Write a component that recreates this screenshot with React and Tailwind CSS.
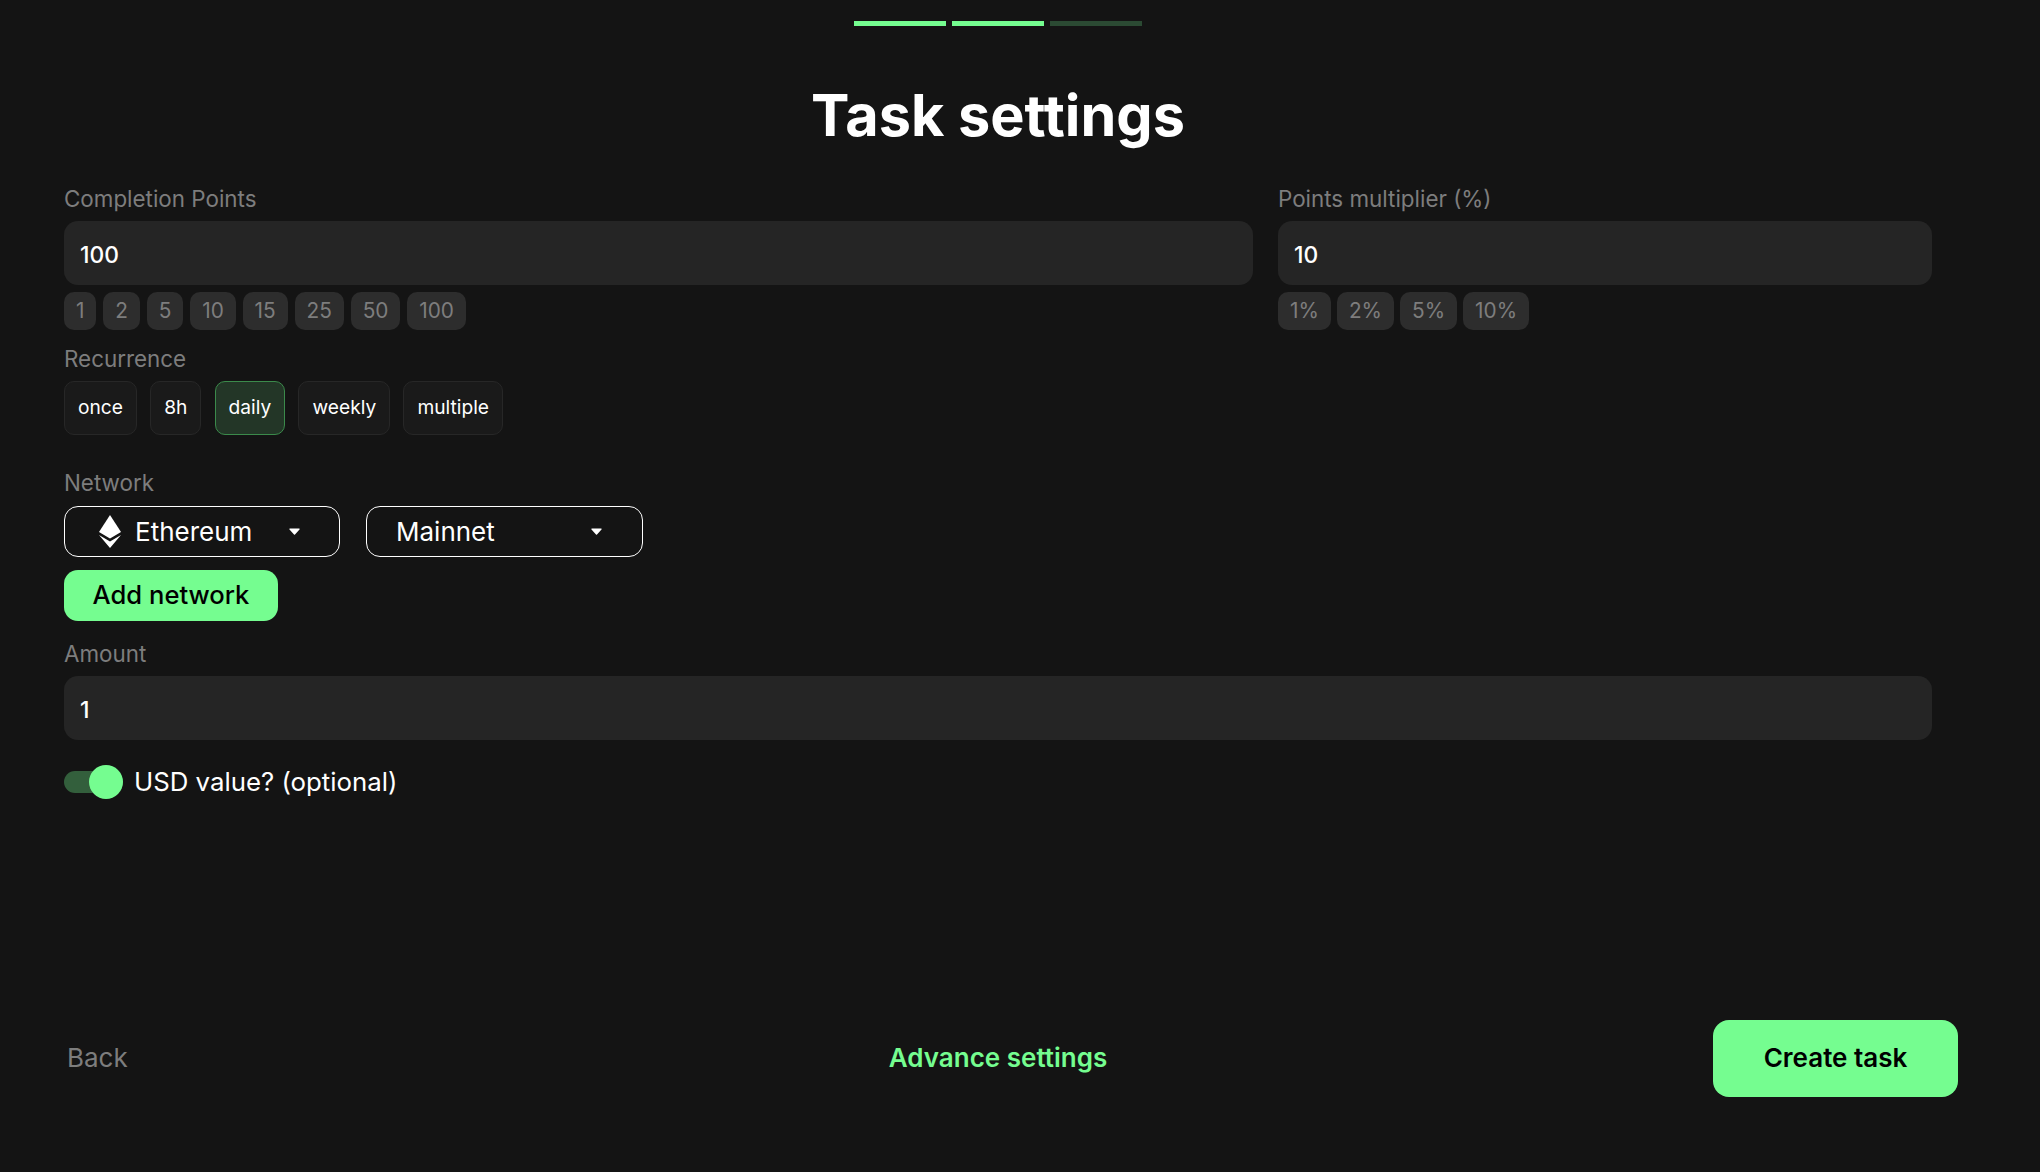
import React from 'react';

const pointPresets = ['1', '2', '5', '10', '15', '25', '50', '100'];
const multiplierPresets = ['1%', '2%', '5%', '10%'];
const recurrences = ['once', '8h', 'daily', 'weekly', 'multiple'];

const FieldLabel = ({ children }) => (
  <label className="block text-[22.4px] leading-[28px] text-[#7d7d7d]">{children}</label>
);

const TextField = ({ value }) => (
  <input
    readOnly
    value={value}
    className="block w-full h-16 mt-[8px] pl-[16px] pr-[15px] pt-[2px] rounded-[14px] bg-[#252525] text-[22.8px] font-medium text-white outline-none"
  />
);

const Presets = ({ items, className }) => (
  <div className={className}>
    {items.map((item) => (
      <button
        key={item}
        className="h-[38px] px-[12px] rounded-[10px] bg-[#2d2d2d] text-[20.8px] leading-[38px] text-[#7d7d7d]"
      >
        {item}
      </button>
    ))}
  </div>
);

const Caret = () => (
  <svg width="11" height="7" viewBox="0 0 11 7" className="shrink-0">
    <path d="M1 0.5h9c.6 0 .9.7.5 1.1L6 6.5c-.3.3-.7.3-1 0L.5 1.6C.1 1.2.4.5 1 .5z" fill="#fff" />
  </svg>
);

const EthIcon = () => (
  <svg width="22" height="33" viewBox="0 0 22 33" className="shrink-0">
    <path d="M11 0L22 17L11 23.5L0 17Z" fill="#fff" />
    <path d="M0 20L11 26.5L22 20L11 33Z" fill="#fff" />
  </svg>
);

const App = () => {
  return (
    <div className="h-[1172px] bg-[#141414] pl-[64px] pr-[108px] font-['Inter',sans-serif] text-white overflow-hidden">
      <div className="flex justify-center gap-[6px] pt-[21px]">
        <div className="w-[92px] h-[5px] bg-[#75fd90]" />
        <div className="w-[92px] h-[5px] bg-[#75fd90]" />
        <div className="w-[92px] h-[5px] bg-[#2b4a33]" />
      </div>

      <h1 className="mt-[51px] text-center text-[57.6px] leading-[76px] font-bold text-white">Task settings</h1>

      <div className="flex gap-[25px] mt-[32px]">
        <div className="w-[1189px]">
          <FieldLabel>Completion Points</FieldLabel>
          <TextField value="100" />
          <Presets items={pointPresets} className="flex gap-[6.8px] mt-[7px]" />
        </div>
        <div className="flex-1">
          <FieldLabel>Points multiplier (%)</FieldLabel>
          <TextField value="10" />
          <Presets items={multiplierPresets} className="flex gap-[6px] mt-[7px]" />
        </div>
      </div>

      <div className="mt-[15px]">
        <FieldLabel>Recurrence</FieldLabel>
        <div className="flex gap-[13.2px] mt-[8px]">
          {recurrences.map((item) => (
            <button
              key={item}
              className={
                item === 'daily'
                  ? 'h-[54px] px-[13px] pb-[1px] rounded-[10px] border border-[#3b8a4b] bg-[#233627] text-[19.2px] text-white'
                  : 'h-[54px] px-[13px] pb-[1px] rounded-[10px] border border-[#272727] bg-[#1a1a1a] text-[19.2px] text-white'
              }
            >
              {item}
            </button>
          ))}
        </div>
      </div>

      <div className="mt-[34px]">
        <FieldLabel>Network</FieldLabel>
        <div className="flex gap-[26px] mt-[9px]">
          <button className="flex items-center w-[276px] h-[51px] pl-[34px] rounded-[14px] border border-white">
            <EthIcon />
            <span className="ml-[14px] w-[154px] text-left text-[26px]">Ethereum</span>
            <Caret />
          </button>
          <button className="flex items-center w-[277px] h-[51px] pl-[29px] rounded-[14px] border border-white">
            <span className="w-[195px] text-left text-[26px]">Mainnet</span>
            <Caret />
          </button>
        </div>
        <button className="block w-[214px] h-[51px] mt-[13px] rounded-[14px] bg-[#75fd90] text-[25.6px] font-medium text-black">
          Add network
        </button>
      </div>

      <div className="mt-[19px]">
        <FieldLabel>Amount</FieldLabel>
        <TextField value="1" />
      </div>

      <div className="flex items-center mt-[25px] h-[34px]">
        <div className="relative w-[59px] h-[22px] rounded-full bg-[#335f3c]">
          <div className="absolute right-0 top-[-6px] w-[34px] h-[34px] rounded-full bg-[#75fd90]" />
        </div>
        <span className="ml-[11px] text-[25.8px] text-white">USD value? (optional)</span>
      </div>

      <div className="grid grid-cols-[1fr_auto_1fr] items-center mt-[221px]">
        <button className="justify-self-start pl-[3px] pb-[2px] text-[26px] text-[#7d7d7d]">Back</button>
        <button className="pb-[2px] text-[26px] font-semibold text-[#75fd90]">Advance settings</button>
        <button className="justify-self-end w-[245px] h-[77px] mr-[-26px] pb-[2px] rounded-[16px] bg-[#75fd90] text-[26px] font-semibold text-black">
          Create task
        </button>
      </div>
    </div>
  );
};

export default App;
